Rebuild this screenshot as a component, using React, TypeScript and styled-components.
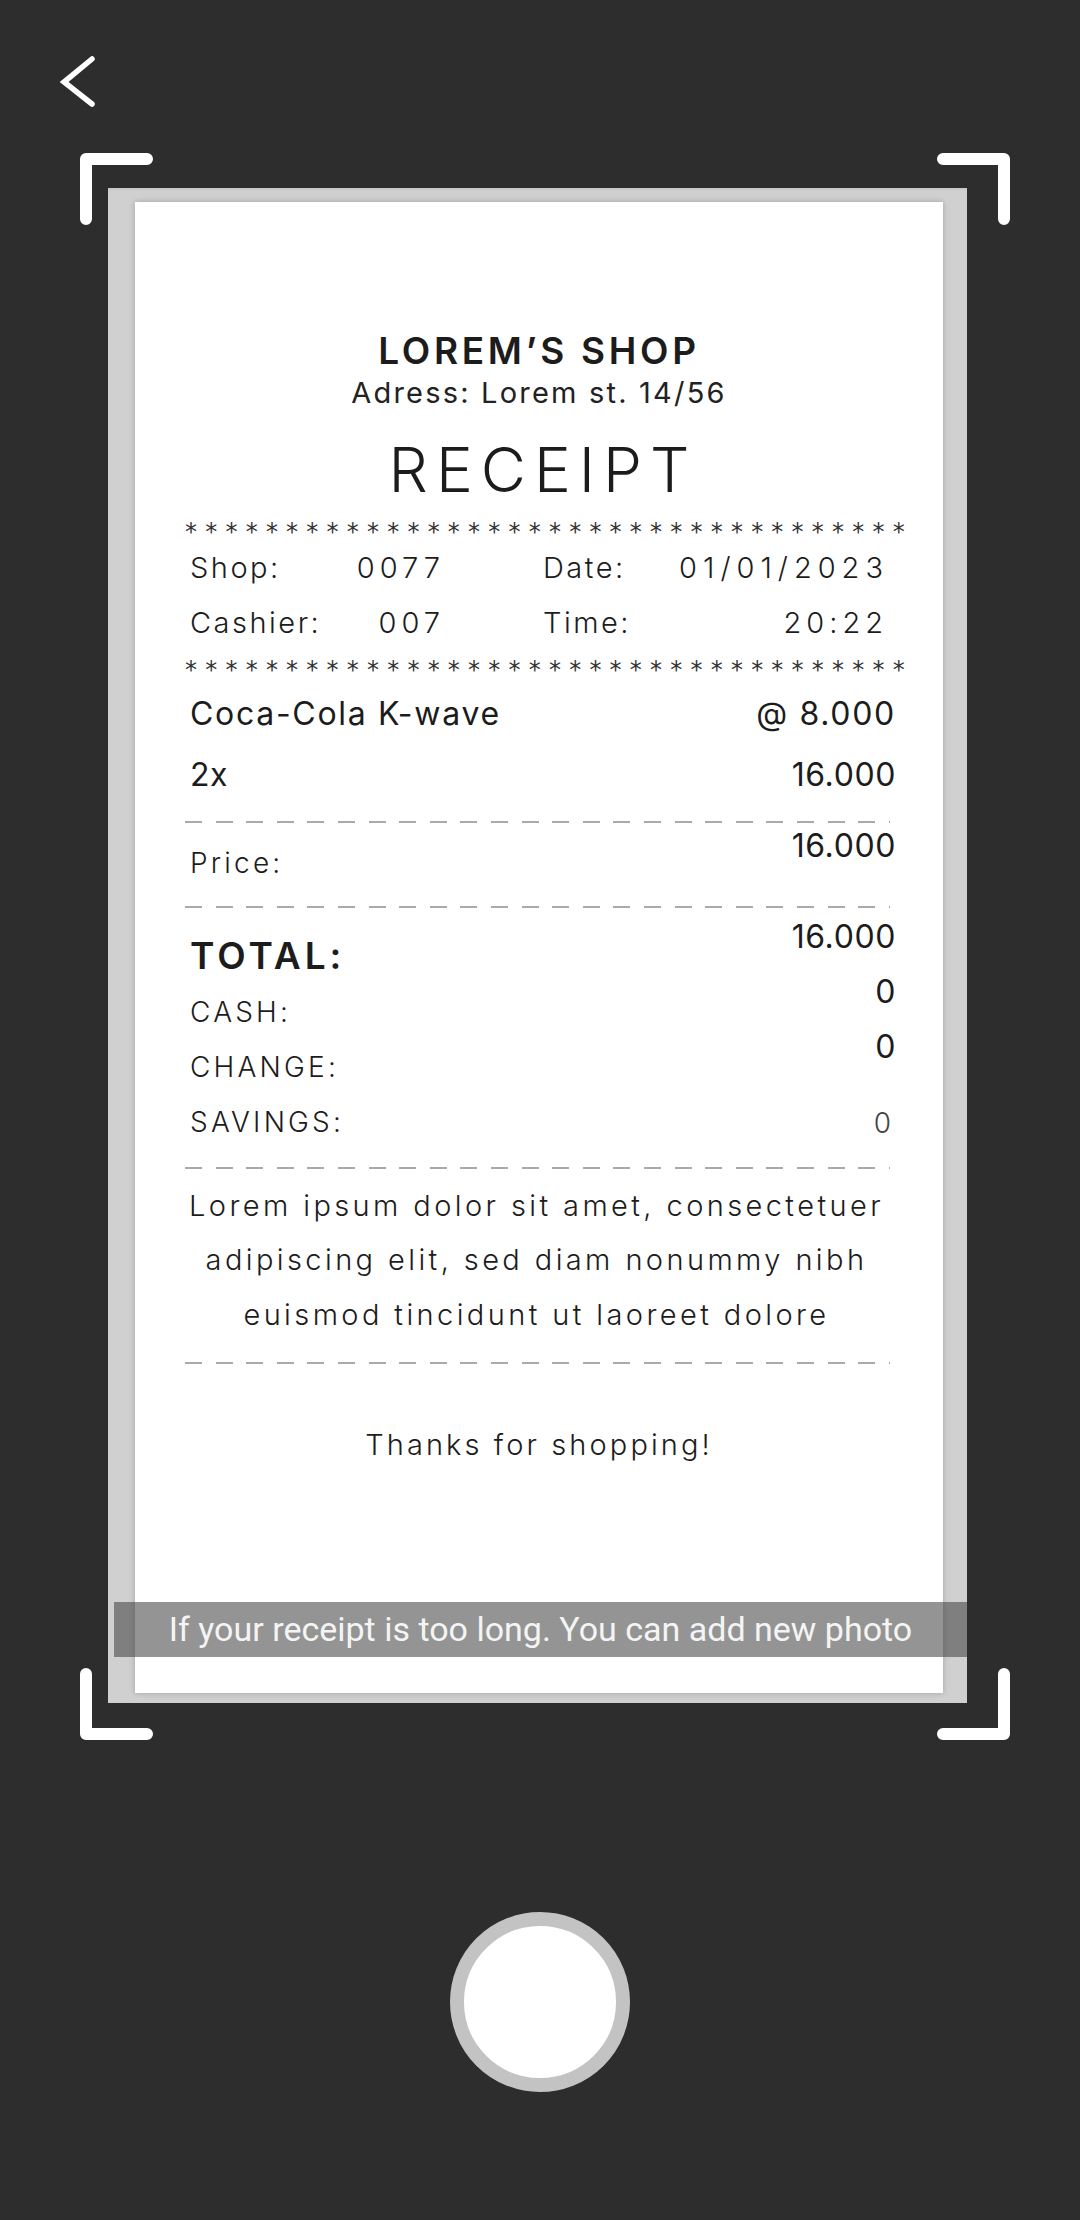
import React from "react";
import styled, { createGlobalStyle } from "styled-components";

const Global = createGlobalStyle`
  html, body { margin: 0; padding: 0; background: #2d2d2d; }
  body { font-family: Inter, "Noto Sans", sans-serif; }
  * { box-sizing: border-box; }
`;

const Page = styled.div`
  width: 1080px;
  height: 2220px;
  background: #2d2d2d;
  display: flex;
  flex-direction: column;
  overflow: hidden;
`;

const Header = styled.header`
  height: 109px;
  padding: 55px 0 0 60px;
  display: flex;
  align-items: flex-start;
`;

const BackButton = styled.button`
  width: 40px;
  height: 54px;
  padding: 0;
  border: 0;
  background: none;
  display: flex;
  cursor: pointer;
`;

const Scanner = styled.section`
  margin: 44px 0 0 80px;
  width: 930px;
  height: 1587px;
  padding: 35px 43px 37px 28px;
  position: relative;
  display: flex;
`;

type Corner = "tl" | "tr" | "bl" | "br";

const BracketSvg = styled.svg<{ $c: Corner }>`
  position: absolute;
  width: 73px;
  height: 72px;
  ${(p) => (p.$c[0] === "t" ? "top: 0;" : "bottom: 0;")}
  ${(p) => (p.$c[1] === "l" ? "left: 0;" : "right: 0;")}
  transform: ${(p) =>
    p.$c === "tl" ? "none" : p.$c === "tr" ? "scaleX(-1)" : p.$c === "bl" ? "scaleY(-1)" : "scale(-1,-1)"};
`;

const Bracket = ({ c }: { c: Corner }) => (
  <BracketSvg $c={c} viewBox="0 0 73 72">
    <path d="M6 66 V6 H67" fill="none" stroke="#fff" strokeWidth="12" strokeLinecap="round" strokeLinejoin="round" />
  </BracketSvg>
);

const Photo = styled.div`
  flex: 1;
  display: flex;
  position: relative;
  background: linear-gradient(#c4c4c4, #d0d0d0 3px);
  padding: 14px 24px 10px 27px;
`;

const Paper = styled.div`
  flex: 1;
  background: #fff;
  box-shadow: 0 0 6px rgba(0, 0, 0, 0.22);
  display: flex;
  flex-direction: column;
  padding-top: 127px;
  color: #1c1c1c;
`;

const ShopName = styled.h1`
  margin: 0;
  text-align: center;
  font: 600 37px/44px Inter, sans-serif;
  letter-spacing: 3.7px;
`;

const Address = styled.p`
  margin: 2px 0 0;
  text-align: center;
  font: 400 29px/36px Inter, sans-serif;
  letter-spacing: 2.2px;
  color: #222;
`;

const Title = styled.h2`
  margin: 24px 0 0;
  text-align: center;
  font: 300 62px/70px Inter, sans-serif;
  letter-spacing: 8px;
  padding-left: 8px;
`;

const Stars = styled.div<{ $mt: number }>`
  margin: ${(p) => p.$mt}px 40px 0 50px;
  height: 20px;
  display: flex;
  justify-content: space-between;
  align-items: center;
  font: 400 24px/20px "DejaVu Sans", sans-serif;
  color: #333;
`;

const Star = styled.span`
  display: block;
  width: 10px;
  text-align: center;
  transform: translateY(4px);
`;

const InfoBlock = styled.div`
  margin-top: 12.5px;
  padding-left: 55px;
  display: flex;
  flex-direction: column;
  gap: 19px;
`;

const InfoRow = styled.div`
  display: flex;
  gap: 103px;
  font: 300 29px/36px Inter, sans-serif;
`;

const Pair = styled.div<{ $w: number }>`
  width: ${(p) => p.$w}px;
  display: flex;
  justify-content: space-between;
`;

const InfoLabel = styled.span`
  letter-spacing: 2.5px;
`;

const InfoValue = styled.span<{ $ls?: number }>`
  letter-spacing: ${(p) => p.$ls ?? 5}px;
  margin-right: -${(p) => p.$ls ?? 5}px;
`;

const ItemRow = styled.div<{ $mt: number }>`
  margin-top: ${(p) => p.$mt}px;
  padding: 0 47px 0 55px;
  display: flex;
  justify-content: space-between;
  font: 400 32px/40px Inter, sans-serif;
  letter-spacing: 0.6px;
`;

const ItemName = styled.span`
  letter-spacing: 1.7px;
`;

const Dashed = styled.div<{ $mt: number }>`
  margin: ${(p) => p.$mt}px 0 0 50px;
  width: 705px;
  height: 2px;
  background: repeating-linear-gradient(90deg, #aaa 0 17px, transparent 17px 30.6px);
`;

const PriceRow = styled.div`
  margin-top: 2.4px;
  padding: 0 47px 0 55px;
  display: flex;
  justify-content: space-between;
  align-items: flex-start;
`;

const SmallLabel = styled.span<{ $mt?: number }>`
  margin-top: ${(p) => p.$mt ?? 0}px;
  font: 300 28px/55px Inter, sans-serif;
  letter-spacing: 3.2px;
`;

const Amount = styled.span<{ $lh?: number }>`
  font: 400 32px/${(p) => p.$lh ?? 55}px Inter, sans-serif;
  letter-spacing: 0.6px;
`;

const Totals = styled.div`
  padding: 0 47px 0 55px;
  display: flex;
  justify-content: space-between;
`;

const LabelStack = styled.div`
  padding-top: 18.6px;
  display: flex;
  flex-direction: column;
`;

const ValueStack = styled.div`
  padding-top: 1px;
  display: flex;
  flex-direction: column;
  align-items: flex-end;
`;

const TotalLabel = styled.span`
  font: 600 37px/58px Inter, sans-serif;
  letter-spacing: 4px;
`;

const Savings = styled.span`
  margin-top: 21.4px;
  margin-right: 5px;
  font: 300 28px/55px Inter, sans-serif;
  color: #444;
`;

const Note = styled.p`
  margin: 10.2px 0 0;
  padding-right: 5px;
  text-align: center;
  font: 300 29px/54.5px Inter, sans-serif;
  letter-spacing: 3.4px;
`;

const Thanks = styled.p`
  margin: 63.5px 0 0;
  text-align: center;
  font: 300 29px/36px Inter, sans-serif;
  letter-spacing: 3.1px;
`;

const HintBand = styled.div`
  position: absolute;
  left: 6px;
  right: 0;
  top: 1414px;
  height: 55px;
  background: rgba(60, 60, 60, 0.55);
  color: #f4f4f4;
  font: 400 34px/55px Roboto, "Liberation Sans", sans-serif;
  text-align: center;
`;

const Shutter = styled.button`
  margin-top: 172px;
  align-self: center;
  width: 180px;
  height: 180px;
  border-radius: 50%;
  background: #fff;
  border: 14px solid #c3c3c3;
  padding: 0;
  cursor: pointer;
`;

const StarLine = ({ mt }: { mt: number }) => (
  <Stars $mt={mt}>
    {Array.from({ length: 36 }, (_, i) => (
      <Star key={i}>*</Star>
    ))}
  </Stars>
);

export default function App() {
  return (
    <Page>
      <Global />
      <Header>
        <BackButton aria-label="Back">
          <svg width="40" height="54" viewBox="0 0 40 54">
            <path d="M32 4 L4 27 L32 49" fill="none" stroke="#fff" strokeWidth="5.5" strokeLinecap="round" strokeLinejoin="miter" />
          </svg>
        </BackButton>
      </Header>

      <Scanner>
        <Bracket c="tl" />
        <Bracket c="tr" />
        <Bracket c="bl" />
        <Bracket c="br" />
        <Photo>
          <Paper>
            <ShopName>LOREM’S SHOP</ShopName>
            <Address>Adress: Lorem st. 14/56</Address>
            <Title>RECEIPT</Title>
            <StarLine mt={12.5} />
            <InfoBlock>
              <InfoRow>
                <Pair $w={250}>
                  <InfoLabel>Shop:</InfoLabel>
                  <InfoValue>0077</InfoValue>
                </Pair>
                <Pair $w={340}>
                  <InfoLabel>Date:</InfoLabel>
                  <InfoValue $ls={6}>01/01/2023</InfoValue>
                </Pair>
              </InfoRow>
              <InfoRow>
                <Pair $w={250}>
                  <InfoLabel>Cashier:</InfoLabel>
                  <InfoValue>007</InfoValue>
                </Pair>
                <Pair $w={340}>
                  <InfoLabel>Time:</InfoLabel>
                  <InfoValue>20:22</InfoValue>
                </Pair>
              </InfoRow>
            </InfoBlock>
            <StarLine mt={14.5} />
            <ItemRow $mt={18.4}>
              <ItemName>Coca-Cola K-wave</ItemName>
              <ItemName>@ 8.000</ItemName>
            </ItemRow>
            <ItemRow $mt={21}>
              <span>2x</span>
              <span>16.000</span>
            </ItemRow>
            <Dashed $mt={26.6} />
            <PriceRow>
              <SmallLabel $mt={10}>Price:</SmallLabel>
              <Amount $lh={40}>16.000</Amount>
            </PriceRow>
            <Dashed $mt={15.6} />
            <Totals>
              <LabelStack>
                <TotalLabel>TOTAL:</TotalLabel>
                <SmallLabel>CASH:</SmallLabel>
                <SmallLabel>CHANGE:</SmallLabel>
                <SmallLabel>SAVINGS:</SmallLabel>
              </LabelStack>
              <ValueStack>
                <Amount>16.000</Amount>
                <Amount>0</Amount>
                <Amount>0</Amount>
                <Savings>0</Savings>
              </ValueStack>
            </Totals>
            <Dashed $mt={15.7} />
            <Note>
              Lorem ipsum dolor sit amet, consectetuer
              <br />
              adipiscing elit, sed diam nonummy nibh
              <br />
              euismod tincidunt ut laoreet dolore
            </Note>
            <Dashed $mt={19.3} />
            <Thanks>Thanks for shopping!</Thanks>
          </Paper>
          <HintBand>If your receipt is too long. You can add new photo</HintBand>
        </Photo>
      </Scanner>

      <Shutter aria-label="Take photo" />
    </Page>
  );
}
